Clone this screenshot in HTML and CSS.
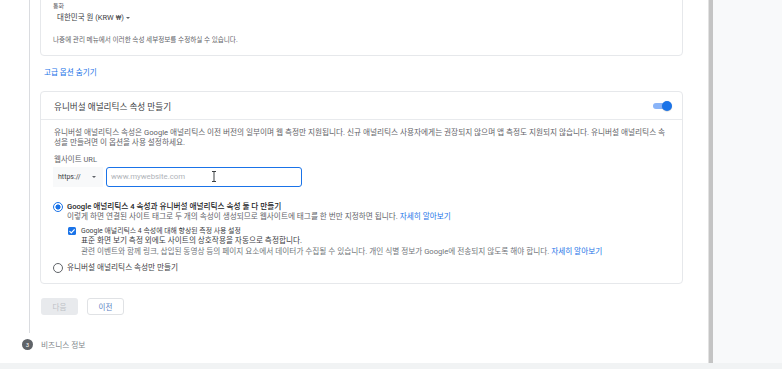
FILE: index.html
```html
<html>

<head>
    <meta http-equiv="Content-Type" content="text/html; charset=UTF-8">
    <link rel="stylesheet" href="styles.css">
</head>

<body>
    <div class="page">
        <div class="main">
            <div class="step">
                <div class="step-rail">
                    <div class="step-line"></div>
                </div>
                <div class="step-body">
                    <div class="card card-first">
                        <div class="field-label">통화</div>
                        <div class="select">대한민국 원 (KRW ₩) <span class="caret"></span></div>
                        <div class="hint">나중에 관리 메뉴에서 이러한 속성 세부정보를 수정하실 수 있습니다.</div>
                    </div>

                    <a class="toggle-link">고급 옵션 숨기기</a>

                    <div class="card card-ua">
                        <div class="card-header">
                            <span>유니버설 애널리틱스 속성 만들기</span>
                            <span class="toggle"><span class="toggle-knob"></span></span>
                        </div>
                        <div class="card-body">
                            <div class="desc">유니버설 애널리틱스 속성은 Google 애널리틱스 이전 버전의 일부이며 웹 측정만 지원됩니다. 신규 애널리틱스 사용자에게는 권장되지 않으며 앱 측정도 지원되지 않습니다. 유니버설 애널리틱스 속성을 만들려면 이 옵션을 사용 설정하세요.</div>

                            <div class="url-label">웹사이트 URL</div>
                            <div class="url-row">
                                <div class="protocol">
                                    <span>https://</span>
                                    <span class="caret"></span>
                                </div>
                                <div class="url-input">
                                    <span>www.mywebsite.com</span>
                                    <svg class="text-cursor" width="6" height="11" viewBox="0 0 6 11">
                                        <path d="M1 0.5h4M1 10.5h4M3 0.5v10" stroke="#3c4043" stroke-width="1" fill="none" />
                                    </svg>
                                </div>
                            </div>

                            <div class="option">
                                <span class="radio radio-checked"></span>
                                <div class="option-text">
                                    <div class="option-title">Google 애널리틱스 4 속성과 유니버설 애널리틱스 속성 둘 다 만들기</div>
                                    <div class="option-desc">이렇게 하면 연결된 사이트 태그로 두 개의 속성이 생성되므로 웹사이트에 태그를 한 번만 지정하면 됩니다. <a class="link">자세히 알아보기</a></div>

                                    <div class="sub-option">
                                        <span class="checkbox">
                                            <svg width="8" height="8" viewBox="0 0 8 8">
                                                <path d="M1.5 4.1l1.8 1.8 3.3-3.5" stroke="#fff" stroke-width="1.2" fill="none" />
                                            </svg>
                                        </span>
                                        <div class="sub-text">
                                            <div class="sub-title">Google 애널리틱스 4 속성에 대해 향상된 측정 사용 설정</div>
                                            <div class="sub-strong">표준 화면 보기 측정 외에도 사이트의 상호작용을 자동으로 측정합니다.</div>
                                            <div class="sub-caption">관련 이벤트와 함께 링크, 삽입된 동영상 등의 페이지 요소에서 데이터가 수집될 수 있습니다. 개인 식별 정보가 Google에 전송되지 않도록 해야 합니다. <a class="link">자세히 알아보기</a></div>
                                        </div>
                                    </div>
                                </div>
                            </div>

                            <div class="option option-last">
                                <span class="radio"></span>
                                <div class="option-text">
                                    <div class="option-plain">유니버설 애널리틱스 속성만 만들기</div>
                                </div>
                            </div>
                        </div>
                    </div>

                    <div class="actions">
                        <button class="btn btn-disabled">다음</button>
                        <button class="btn btn-outline">이전</button>
                    </div>
                </div>
            </div>

            <div class="step step-next">
                <div class="step-rail">
                    <span class="step-num">3</span>
                </div>
                <div class="step-label">비즈니스 정보</div>
            </div>
        </div>
        <div class="scrollbar"></div>
        <div class="side"></div>
    </div>
    <div class="bottom-bar"></div>
</body>

</html>
```

FILE: styles.css
```css
body {
    margin: 0;
    font-family: Roboto, "Noto Sans CJK KR", sans-serif;
    color: #5f6368;
    background: #f1f3f4;
}

.page {
    display: flex;
    height: 363px;
    background: #ffffff;
}

.main {
    width: 708px;
    flex: none;
    overflow: hidden;
}

.scrollbar {
    width: 4px;
    background: #c4c4c4;
    border-left: 1px solid #e2e2e2;
}

.side {
    flex: 1;
    background: #f8f9fa;
}

.bottom-bar {
    height: 6px;
    background: #f1f3f4;
}

.step {
    display: flex;
}

.step-rail {
    width: 40px;
    flex: none;
}

.step-line {
    width: 1px;
    height: 100%;
    margin-left: 29px;
    background: #dadce0;
}

.step-body {
    width: 643px;
    padding-bottom: 18px;
}

.card {
    border: 1px solid #e6e8eb;
    border-radius: 4px;
    background: #ffffff;
}

.card-first {
    margin-top: -13px;
    padding: 12px 12px 10px;
}

.field-label {
    font-size: 6px;
    line-height: 12px;
}

.select {
    font-size: 7.5px;
    line-height: 12px;
    padding-left: 4px;
    color: #3c4043;
}

.caret {
    display: inline-block;
    width: 0;
    height: 0;
    border-left: 2px solid transparent;
    border-right: 2px solid transparent;
    border-top: 2.5px solid #5f6368;
    vertical-align: middle;
}

.hint {
    font-size: 6.6px;
    line-height: 10px;
    margin-top: 11px;
}

.toggle-link {
    display: block;
    margin: 12px 0 13px;
    padding-left: 4px;
    font-size: 7.6px;
    line-height: 10px;
    color: #1a73e8;
}

.card-header {
    display: flex;
    align-items: center;
    justify-content: space-between;
    height: 27px;
    padding: 0 14px 0 13px;
    border-bottom: 1px solid #e8eaed;
    font-size: 8.6px;
    color: #3c4043;
}

.toggle {
    display: flex;
    align-items: center;
    justify-content: flex-end;
    width: 15px;
    height: 6px;
    border-radius: 3px;
    background: #8ab4f8;
}

.toggle-knob {
    flex: none;
    width: 10px;
    height: 10px;
    margin-right: -4px;
    border-radius: 50%;
    background: #1a73e8;
    box-shadow: 0 0.5px 1px rgba(0, 0, 0, 0.25);
}

.card-body {
    padding: 8px 13px 10px;
    font-size: 7.65px;
    line-height: 10px;
}

.url-label {
    margin-top: 7px;
    font-size: 7.5px;
}

.url-row {
    display: flex;
    gap: 3px;
    height: 20px;
    margin: 2px 0 0 -1px;
}

.protocol {
    display: flex;
    align-items: center;
    justify-content: space-between;
    width: 50px;
    box-sizing: border-box;
    padding: 0 7px 0 5px;
    background: #f8f9fa;
    color: #3c4043;
    font-size: 7px;
}

.url-input {
    position: relative;
    display: flex;
    align-items: center;
    width: 196px;
    box-sizing: border-box;
    padding-left: 4px;
    border: 1.5px solid #1a73e8;
    border-radius: 3px;
    color: #b0b4b9;
    font-size: 7.8px;
}

.text-cursor {
    position: absolute;
    left: 104px;
    top: 3px;
}

.option {
    display: flex;
    gap: 4px;
    margin: 15px 0 0 -1px;
}

.option-last {
    margin-top: 6px;
}

.radio {
    flex: none;
    width: 10px;
    height: 10px;
    box-sizing: border-box;
    border: 1.5px solid #5f6368;
    border-radius: 50%;
}

.radio-checked {
    border-color: #1a73e8;
    background: radial-gradient(circle, #1a73e8 0 2.4px, transparent 2.7px);
}

.option-title {
    color: #202124;
    font-weight: 500;
}

.option-plain {
    color: #3c4043;
}

.option-desc {
    line-height: 9.5px;
}

.link {
    color: #1a73e8;
}

.sub-option {
    display: flex;
    gap: 5px;
    margin: 4px 0 0 1px;
    line-height: 10.5px;
}

.checkbox {
    flex: none;
    display: flex;
    width: 8px;
    height: 8px;
    margin-top: 1px;
    border-radius: 1.5px;
    background: #1a73e8;
}

.sub-title {
    font-size: 6.9px;
    color: #3c4043;
}

.sub-strong {
    color: #3c4043;
}

.sub-caption {
    color: #70757a;
}

.actions {
    display: flex;
    gap: 9px;
    margin: 14px 0 0 1px;
}

.btn {
    width: 37px;
    height: 17px;
    padding: 0;
    border-radius: 3px;
    font-family: Roboto, "Noto Sans CJK KR", sans-serif;
    font-size: 7.5px;
}

.btn-disabled {
    border: none;
    background: #e8eaed;
    color: #bdc1c6;
}

.btn-outline {
    border: 1px solid #e0e2e5;
    background: #ffffff;
    color: #5b7fc4;
}

.step-next {
    align-items: center;
    padding-top: 6px;
}

.step-num {
    display: flex;
    align-items: center;
    justify-content: center;
    width: 11px;
    height: 11px;
    margin-left: 22px;
    border-radius: 50%;
    background: #5f6368;
    color: #ffffff;
    font-size: 6px;
}

.step-label {
    padding-left: 1px;
    font-size: 7.7px;
    color: #80868b;
}
```
